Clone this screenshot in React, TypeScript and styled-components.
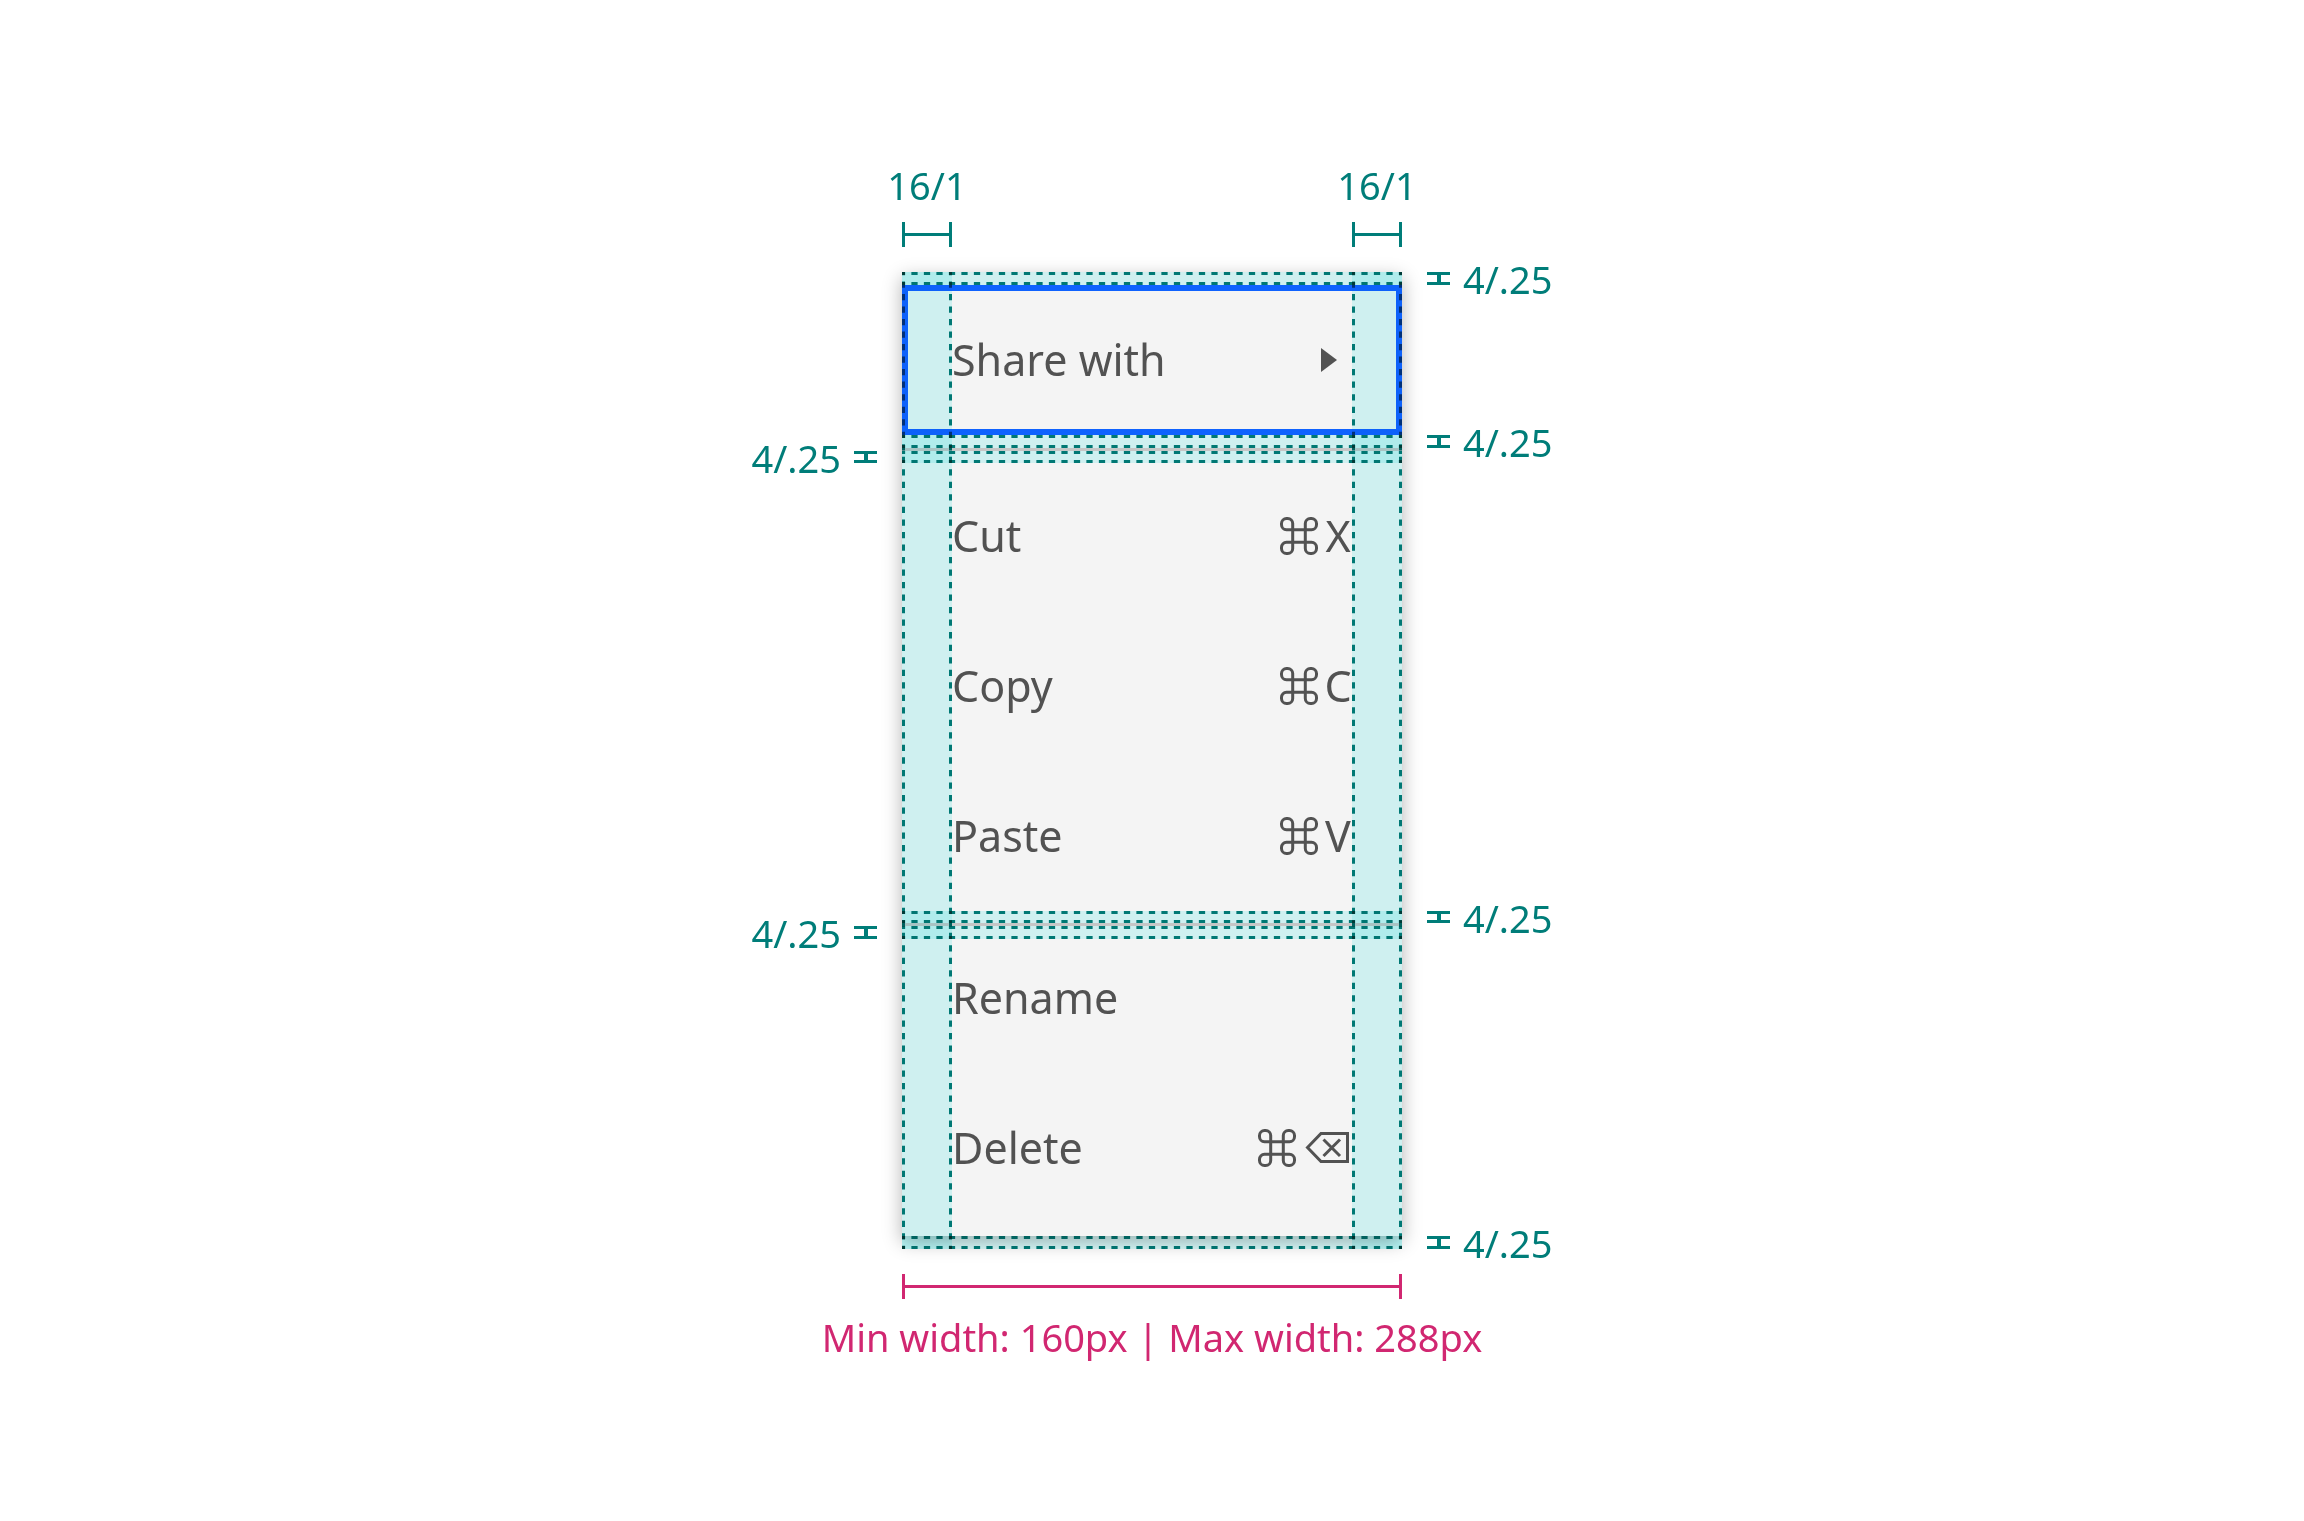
import React from "react";
import styled, { createGlobalStyle } from "styled-components";

const TEAL = "#007d79";
const MAGENTA = "#d12771";
const INK = "#525252";

const GlobalStyle = createGlobalStyle`
  *, *::before, *::after { box-sizing: border-box; }
  body {
    margin: 0;
    background: #fff;
    font-family: "Noto Sans", "Open Sans", sans-serif;
  }
`;

const Page = styled.main`
  min-height: 100vh;
  display: flex;
  flex-direction: column;
  align-items: center;
  justify-content: center;
`;

const Caption = styled.span<{ $color: string }>`
  color: ${(p) => p.$color};
  font-size: 38px;
  font-weight: 400;
  line-height: 50px;
  white-space: nowrap;
`;

/* Horizontal measure: |-----| */
const Measure = styled.div<{ $color: string }>`
  align-self: stretch;
  height: 25px;
  color: ${(p) => p.$color};
  border: solid currentColor;
  border-width: 0 3px;
  display: flex;
  align-items: center;

  &::before {
    content: "";
    flex: 1;
    height: 3px;
    background: currentColor;
  }
`;

const TopMarkers = styled.div`
  width: 500px;
  margin-bottom: 25px;
  display: flex;
  justify-content: space-between;
`;

const TopMarker = styled.div`
  width: 50px;
  display: flex;
  flex-direction: column;
  align-items: center;
  gap: 12px;
`;

const WidthMarker = styled.div`
  width: 500px;
  margin-top: 25px;
  display: flex;
  flex-direction: column;
  align-items: center;
  gap: 13px;
`;

/* Menu, highlighted spacing and side labels share one set of rows. */
const Spec = styled.div`
  align-self: stretch;
  display: grid;
  grid-template-columns: 1fr 50px 400px 50px 1fr;
  grid-template-rows: 13px 150px 13px 3px 12px 448px 12px 3px 13px 297px 13px;
`;

const SideLabel = styled.div<{ $row: number; $side: "left" | "right" }>`
  grid-row: ${(p) => p.$row};
  grid-column: ${(p) => (p.$side === "left" ? 1 : 5)};
  display: flex;
  flex-direction: ${(p) => (p.$side === "left" ? "row-reverse" : "row")};
  align-items: center;
  gap: 13px;
  padding: 0 25px;
  min-height: 0;
`;

/* Vertical measure for a thin gap: an upright capital I */
const GapMeasure = styled.div`
  align-self: stretch;
  width: 23px;
  border: solid ${TEAL};
  border-width: 3px 0;
  display: flex;
  justify-content: center;

  &::before {
    content: "";
    width: 4px;
    background: ${TEAL};
  }
`;

const GapCaption = styled(Caption)`
  line-height: 12px;
  padding-top: 2px;
`;

const Menu = styled.div`
  grid-row: 1 / 11;
  grid-column: 2 / 5;
  background: #f4f4f4;
  box-shadow: 0 6px 18px rgba(0, 0, 0, 0.3);
  display: flex;
  flex-direction: column;
`;

const Group = styled.div<{ $top: number; $bottom: number }>`
  padding: ${(p) => p.$top}px 0 ${(p) => p.$bottom}px;
  display: flex;
  flex-direction: column;
`;

const Divider = styled.hr`
  width: 100%;
  height: 3px;
  margin: 0 0 -3px;
  border: 0;
  flex: none;
  background: #c6c6c6;
`;

const MenuItem = styled.button<{ $focused?: boolean }>`
  height: 150px;
  padding: 0 51px 0 50px;
  border: 0;
  outline: ${(p) => (p.$focused ? "6px solid #0f62fe" : "none")};
  outline-offset: -6px;
  background: transparent;
  color: ${INK};
  font-family: inherit;
  font-size: 43px;
  line-height: 56px;
  text-align: left;
  display: flex;
  align-items: center;
  justify-content: space-between;
`;

const Shortcut = styled.span`
  display: flex;
  align-items: center;
  gap: 7px;
`;

const KeyLetter = styled.span`
  width: 26px;
  display: flex;
  justify-content: center;
`;

const Caret = styled.svg`
  width: 16px;
  height: 24px;
  margin-right: 14px;
  fill: currentColor;
`;

const Band = styled.svg<{ $rows: string; $columns: string }>`
  grid-row: ${(p) => p.$rows};
  grid-column: ${(p) => p.$columns};
  width: 100%;
  height: 100%;
  display: block;
  overflow: hidden;
  background: #d9fbfb;
  mix-blend-mode: multiply;
  pointer-events: none;
  stroke: ${TEAL};
  stroke-width: 6;
`;

/* Strokes are centred on the band's edge, so half of each is clipped. */
function HorizontalBand({ row }: { row: number }) {
  const dash = { pathLength: 80, strokeDasharray: "1 1", strokeDashoffset: 0.5 };
  return (
    <Band $rows={`${row}`} $columns="2 / 5" aria-hidden="true">
      <line x1="0" x2="100%" y1="0" y2="0" {...dash} />
      <line x1="0" x2="100%" y1="100%" y2="100%" {...dash} />
    </Band>
  );
}

function VerticalBand({ column }: { column: number }) {
  const dash = { pathLength: 156, strokeDasharray: "1 1", strokeDashoffset: 0.5 };
  return (
    <Band $rows="1 / 12" $columns={`${column}`} aria-hidden="true">
      <line x1="0" x2="0" y1="0" y2="100%" {...dash} />
      <line x1="100%" x2="100%" y1="0" y2="100%" {...dash} />
    </Band>
  );
}

function CommandIcon() {
  return (
    <svg width="38" height="38" viewBox="0 0 38 38" fill="none" stroke="currentColor" strokeWidth="3" role="img" aria-label="Command">
      <path d="M12.7 12.7H6.5a5 5 0 0 1-5-5V6.5a5 5 0 0 1 5-5h1.2a5 5 0 0 1 5 5v25a5 5 0 0 1-5 5H6.5a5 5 0 0 1-5-5v-1.2a5 5 0 0 1 5-5h25a5 5 0 0 1 5 5v1.2a5 5 0 0 1-5 5h-1.2a5 5 0 0 1-5-5v-25a5 5 0 0 1 5-5h1.2a5 5 0 0 1 5 5v1.2a5 5 0 0 1-5 5z" />
    </svg>
  );
}

function BackspaceIcon() {
  return (
    <svg width="48" height="31" viewBox="-2 0 48 31" fill="none" stroke="currentColor" strokeWidth="3" role="img" aria-label="Backspace">
      <path d="M2.5 15.5 16 1.5h26.5v28H16z" />
      <path d="M18.5 7.5l16.5 16.5M35 7.5L18.5 24" />
    </svg>
  );
}

function Item({ label, children, focused }: { label: string; children?: React.ReactNode; focused?: boolean }) {
  return (
    <MenuItem type="button" role="menuitem" $focused={focused}>
      <span>{label}</span>
      {children}
    </MenuItem>
  );
}

function KeyHint({ children }: { children: React.ReactNode }) {
  return (
    <Shortcut>
      <CommandIcon />
      {children}
    </Shortcut>
  );
}

const sideLabels: { row: number; side: "left" | "right" }[] = [
  { row: 1, side: "right" },
  { row: 3, side: "right" },
  { row: 5, side: "left" },
  { row: 7, side: "right" },
  { row: 9, side: "left" },
  { row: 11, side: "right" },
];

export default function App() {
  return (
    <>
      <GlobalStyle />
      <Page>
        <TopMarkers>
          {["start", "end"].map((edge) => (
            <TopMarker key={edge}>
              <Caption $color={TEAL}>16/1</Caption>
              <Measure $color={TEAL} />
            </TopMarker>
          ))}
        </TopMarkers>

        <Spec>
          <Menu role="menu">
            <Group $top={13} $bottom={13}>
              <Item label="Share with" focused>
                <Caret viewBox="0 0 16 24" aria-hidden="true">
                  <path d="M0 0l16 12L0 24z" />
                </Caret>
              </Item>
            </Group>
            <Divider />
            <Group $top={13} $bottom={12}>
              <Item label="Cut">
                <KeyHint>
                  <KeyLetter>X</KeyLetter>
                </KeyHint>
              </Item>
              <Item label="Copy">
                <KeyHint>
                  <KeyLetter>C</KeyLetter>
                </KeyHint>
              </Item>
              <Item label="Paste">
                <KeyHint>
                  <KeyLetter>V</KeyLetter>
                </KeyHint>
              </Item>
            </Group>
            <Divider />
            <Group $top={0} $bottom={13}>
              <Item label="Rename" />
              <Item label="Delete">
                <KeyHint>
                  <BackspaceIcon />
                </KeyHint>
              </Item>
            </Group>
          </Menu>

          <VerticalBand column={2} />
          <VerticalBand column={4} />
          {[1, 3, 5, 7, 9, 11].map((row) => (
            <HorizontalBand key={row} row={row} />
          ))}

          {sideLabels.map(({ row, side }) => (
            <SideLabel key={row} $row={row} $side={side}>
              <GapMeasure />
              <GapCaption $color={TEAL}>4/.25</GapCaption>
            </SideLabel>
          ))}
        </Spec>

        <WidthMarker>
          <Measure $color={MAGENTA} />
          <Caption $color={MAGENTA}>Min width: 160px | Max width: 288px</Caption>
        </WidthMarker>
      </Page>
    </>
  );
}
